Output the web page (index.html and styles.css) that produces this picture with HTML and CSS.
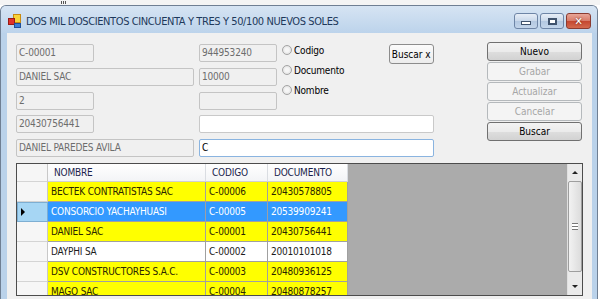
FILE: index.html
```html
<!DOCTYPE html>
<html lang="es">
<head>
    <meta charset="UTF-8">
    <meta name="viewport" content="width=device-width, initial-scale=1.0">
    <title>Clientes</title>
    <link rel="stylesheet" href="styles.css">
</head>
<body>
    <div class="desk-strip">
        <span class="grip"></span>
    </div>
    <div class="window">
        <div class="titlebar">
            <svg class="app-icon" width="14" height="14" viewBox="0 0 14 14">
                <rect x="5.5" y="0.5" width="7" height="8" fill="#f7d43a" stroke="#c98a10"/>
                <rect x="0.5" y="4.5" width="6" height="6" fill="#e0322a" stroke="#9a1a14"/>
                <rect x="6.5" y="9.5" width="6" height="4" fill="#3f7fd6" stroke="#1f4f9a"/>
            </svg>
            <span class="title">DOS MIL DOSCIENTOS CINCUENTA Y TRES Y 50/100 NUEVOS SOLES</span>
            <div class="win-buttons">
                <span class="wbtn min"><i></i></span>
                <span class="wbtn max"><i></i></span>
                <span class="wbtn close">✕</span>
            </div>
        </div>
        <div class="client">
            <div class="top">
                <div class="form">
                    <div class="upper">
                        <div class="col">
                            <div class="tb short">C-00001</div>
                            <div class="tb wide">DANIEL SAC</div>
                            <div class="tb short">2</div>
                        </div>
                        <div class="col">
                            <div class="tb short">944953240</div>
                            <div class="tb short">10000</div>
                            <div class="tb short"></div>
                        </div>
                        <div class="radios">
                            <label class="radio"><span class="dot"></span>Codigo</label>
                            <label class="radio"><span class="dot"></span>Documento</label>
                            <label class="radio"><span class="dot"></span>Nombre</label>
                        </div>
                        <button class="btn find-x">Buscar x</button>
                    </div>
                    <div class="lower">
                        <div class="tb short">20430756441</div>
                        <div class="tb long white"></div>
                        <div class="tb wide">DANIEL PAREDES AVILA</div>
                        <div class="tb long white focus">C</div>
                    </div>
                </div>
                <div class="actions">
                    <button class="btn">Nuevo</button>
                    <button class="btn" disabled>Grabar</button>
                    <button class="btn" disabled>Actualizar</button>
                    <button class="btn" disabled>Cancelar</button>
                    <button class="btn">Buscar</button>
                </div>
            </div>
            <div class="grid">
                <table class="rows">
                    <colgroup>
                        <col class="c-head">
                        <col class="c-name">
                        <col class="c-code">
                        <col class="c-doc">
                    </colgroup>
                    <tr>
                        <th class="rh"></th>
                        <th>NOMBRE</th>
                        <th>CODIGO</th>
                        <th>DOCUMENTO</th>
                    </tr>
                    <tr class="yellow">
                        <td class="rh"></td>
                        <td>BECTEK CONTRATISTAS SAC</td>
                        <td>C-00006</td>
                        <td>20430578805</td>
                    </tr>
                    <tr class="selected">
                        <td class="rh"><span class="arrow"></span></td>
                        <td>CONSORCIO YACHAYHUASI</td>
                        <td>C-00005</td>
                        <td>20539909241</td>
                    </tr>
                    <tr class="yellow">
                        <td class="rh"></td>
                        <td>DANIEL SAC</td>
                        <td>C-00001</td>
                        <td>20430756441</td>
                    </tr>
                    <tr>
                        <td class="rh"></td>
                        <td>DAYPHI SA</td>
                        <td>C-00002</td>
                        <td>20010101018</td>
                    </tr>
                    <tr class="yellow">
                        <td class="rh"></td>
                        <td>DSV CONSTRUCTORES S.A.C.</td>
                        <td>C-00003</td>
                        <td>20480936125</td>
                    </tr>
                    <tr class="yellow">
                        <td class="rh"></td>
                        <td>MAGO SAC</td>
                        <td>C-00004</td>
                        <td>20480878257</td>
                    </tr>
                </table>
                <div class="fill"></div>
                <div class="vscroll">
                    <span class="sb-btn up"></span>
                    <div class="track">
                        <div class="thumb"><i></i></div>
                    </div>
                    <span class="sb-btn down"></span>
                </div>
            </div>
        </div>
    </div>
</body>
</html>
```

FILE: styles.css
```css
* {
    box-sizing: border-box;
}

body {
    margin: 0;
    background: #fff;
    font-family: "DejaVu Sans Condensed", "DejaVu Sans", sans-serif;
    font-stretch: condensed;
    font-size: 10px;
    letter-spacing: -0.2px;
    overflow: hidden;
}

.desk-strip {
    height: 5px;
    background: #f4f4f4;
    position: relative;
}

.grip {
    position: absolute;
    left: 61px;
    top: 1px;
    width: 5px;
    height: 3px;
    background: repeating-linear-gradient(90deg, #555 0 1px, transparent 1px 2px);
}

.window {
    width: 598px;
    height: 300px;
    background: #bad2ea;
    border: 1px solid #6f7f93;
    border-bottom: none;
    border-radius: 6px 6px 0 0;
}

.titlebar {
    height: 27px;
    padding: 3px 6px 0 7px;
    display: flex;
    align-items: center;
    background: linear-gradient(#d6e4f3, #bcd3eb);
    border-radius: 5px 5px 0 0;
}

.app-icon {
    flex: none;
}

.title {
    margin-left: 4px;
    font-size: 11px;
    letter-spacing: -0.4px;
    color: #1e395b;
    white-space: nowrap;
}

.win-buttons {
    margin-left: auto;
    display: flex;
    gap: 2px;
}

.wbtn {
    height: 16px;
    width: 24px;
    border: 1px solid #6e85a6;
    border-radius: 3px;
    background: linear-gradient(#e7eef7, #c9d8ea 50%, #b3c8e1 51%, #c3d5ea);
    display: flex;
    justify-content: center;
    align-items: center;
}

.wbtn.min i {
    width: 10px;
    height: 4px;
    margin-top: 3px;
    background: #fff;
    border: 1px solid #40536d;
}

.wbtn.max i {
    width: 9px;
    height: 7px;
    background: #fff;
    border: 2px solid #40536d;
    box-shadow: inset 0 0 0 1px #fff;
}

.wbtn.close {
    width: 25px;
    border-color: #8a3b31;
    background: linear-gradient(#e8a597, #d77a68 50%, #c4462f 51%, #d46a4e);
    color: #fff;
    font-size: 11px;
    font-weight: bold;
    text-shadow: 0 0 2px #5a1a10;
}

.client {
    margin: 0 5px 0 6px;
    height: 272px;
    background: #f0f0f0;
    padding: 10px 10px 0 9px;
}

.top {
    display: flex;
    gap: 53px;
}

.form {
    margin-top: 1px;
    width: 418px;
}

.upper {
    display: flex;
    align-items: flex-start;
    gap: 5px;
}

.col {
    display: flex;
    flex-direction: column;
    gap: 6px;
    width: 178px;
}

.col + .col {
    width: 78px;
}

.tb {
    height: 18px;
    border: 1px solid #c4c4c4;
    border-radius: 2px;
    background: #f0f0f0;
    color: #6d6d6d;
    padding: 0 2px;
    line-height: 16px;
    white-space: nowrap;
}

.tb.short {
    width: 78px;
}

.tb.wide {
    width: 178px;
}

.tb.long {
    width: 235px;
}

.tb.white {
    background: #fff;
    color: #000;
    border-color: #c9c9c9;
}

.tb.focus {
    border-color: #8ab4e0;
}

.radios {
    width: 105px;
    margin-top: -4px;
}

.radio {
    height: 20px;
    display: flex;
    align-items: center;
    gap: 2px;
    color: #000;
}

.dot {
    width: 10px;
    height: 10px;
    border-radius: 50%;
    border: 1px solid #a4a4a4;
    background: radial-gradient(#f6f6f6 30%, #d8d8d8);
}

.btn {
    font: inherit;
    color: #000;
    height: 19px;
    padding: 0;
    border: 1px solid #707070;
    border-radius: 3px;
    background: linear-gradient(#f3f3f3, #ebebeb 50%, #dedede 51%, #d2d2d2);
}

.btn:disabled {
    border-color: #b5b9bc;
    background: #f4f4f4;
    color: #a6a6a6;
}

.btn.find-x {
    width: 47px;
    height: 20px;
    border-color: #8c8c8c;
    background: linear-gradient(#fbfbfb, #ececec);
}

.lower {
    margin-top: 5px;
    display: grid;
    grid-template-columns: 178px 235px;
    gap: 6px 5px;
}

.actions {
    width: 95px;
    display: flex;
    flex-direction: column;
    gap: 1px;
    margin-top: -1px;
}

.grid {
    margin-top: 6px;
    width: 567px;
    height: 133px;
    border: 1px solid #4c4c4c;
    background: #ababab;
    display: flex;
    overflow: hidden;
}

.rows {
    flex: none;
    align-self: flex-start;
    border-collapse: separate;
    border-spacing: 0;
    table-layout: fixed;
    width: 331px;
    background: #fff;
}

.c-head { width: 31px; }
.c-name { width: 158px; }
.c-code { width: 62px; }
.c-doc { width: 80px; }

.rows th,
.rows td {
    border-right: 1px solid #a0a0a0;
    border-bottom: 1px solid #a0a0a0;
    white-space: nowrap;
    overflow: hidden;
    text-align: left;
    font-weight: normal;
}

.rows th {
    height: 18px;
    padding: 0 0 0 6px;
    color: #1a1f4c;
    background: linear-gradient(#ffffff, #f3f4f6);
    border-right-color: #dadde2;
    border-bottom-color: #d0d0d0;
}

.rows td {
    height: 20px;
    padding: 0 0 0 3px;
    color: #1c1c1c;
}

.rows .rh {
    padding: 0;
    background: #f6f6f6;
    border-right-color: #c8c8c8;
    border-bottom-color: #d4d4d4;
}

.yellow td {
    background: #ffff00;
    color: #2a2500;
}

.selected td {
    background: #3399ff;
    color: #fff;
}

.selected .rh {
    background: #a6d6f4;
    border: 1px solid #7daed2;
}

.arrow {
    display: block;
    margin-left: 3px;
    width: 0;
    height: 0;
    border-left: 4px solid #000;
    border-top: 4px solid transparent;
    border-bottom: 4px solid transparent;
}

.fill {
    flex: 1;
}

.vscroll {
    width: 15px;
    display: flex;
    flex-direction: column;
    background: #eaeaea;
    border-left: 1px solid #e0e0e0;
}

.sb-btn {
    height: 17px;
    flex: none;
    display: flex;
    justify-content: center;
    align-items: center;
}

.sb-btn::after {
    content: "";
    border-left: 3px solid transparent;
    border-right: 3px solid transparent;
}

.sb-btn.up::after {
    border-bottom: 3px solid #222;
}

.sb-btn.down::after {
    border-top: 3px solid #222;
}

.track {
    flex: 1;
}

.thumb {
    height: 91px;
    border: 1px solid #9e9e9e;
    border-radius: 2px;
    background: linear-gradient(90deg, #f2f2f2, #dcdcdc);
    display: flex;
    justify-content: center;
    align-items: center;
}

.thumb i {
    width: 6px;
    height: 7px;
    border-top: 1px solid #777;
    border-bottom: 1px solid #777;
    background: linear-gradient(#fff 2px, #777 2px, #777 3px, #fff 3px);
}
```
